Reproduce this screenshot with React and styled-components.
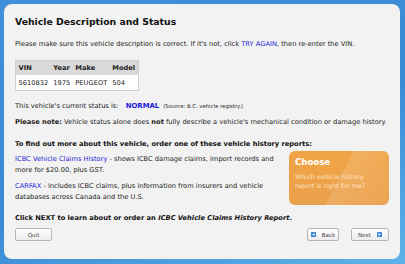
import React from "react";
import styled, { createGlobalStyle } from "styled-components";

const Global = createGlobalStyle`
  html, body { margin: 0; padding: 0; }
  body {
    width: 405px;
    height: 264px;
    overflow: hidden;
    background: linear-gradient(160deg, #3f8fd8 0%, #3b8ad6 55%, #5cb2e8 100%);
    font-family: "DejaVu Sans", Verdana, sans-serif;
  }
`;

const Page = styled.div`
  padding: 4px 5px 5px 4px;
`;

const Panel = styled.div`
  box-sizing: border-box;
  width: 396px;
  height: 255px;
  background: #f2f2f2;
  border-radius: 8px;
  padding: 12px 11px 0 11px;
  color: #222;
  font-size: 6.7px;
  display: flex;
  flex-direction: column;
`;

const Title = styled.h1`
  margin: 0;
  font-size: 9.3px;
  line-height: 12px;
  font-weight: bold;
  color: #111;
`;

const Para = styled.p`
  margin: ${(p) => p.$mt || 0}px 0 0 0;
  line-height: ${(p) => p.$lh || 10}px;
  font-weight: ${(p) => (p.$bold ? "bold" : "normal")};
  color: ${(p) => (p.$bold ? "#111" : "#222")};
  white-space: ${(p) => (p.$nowrap ? "nowrap" : "normal")};
`;

const Link = styled.span`
  color: #2424d6;
`;

const Table = styled.table`
  margin-top: 11px;
  border-collapse: collapse;
  border: 1px solid #cfcfcf;
  align-self: flex-start;
`;

const Th = styled.th`
  background: #d9d9d9;
  font-weight: bold;
  text-align: ${(p) => p.$align || "left"};
  padding: 0 2.5px;
  height: 14px;
  color: #222;
`;

const Td = styled.td`
  background: #fff;
  padding: 0 2.5px;
  height: 15px;
  white-space: nowrap;
`;

const Status = styled.span`
  color: #1717d8;
  font-weight: bold;
  font-size: 6.9px;
  margin-left: 5px;
`;

const Source = styled.span`
  font-size: 5.3px;
  margin-left: 4px;
`;

const Reports = styled.div`
  display: flex;
  justify-content: space-between;
  margin-top: 2px;
`;

const ReportText = styled.div`
  width: 272px;
  padding-top: 2.5px;
`;

const Card = styled.div`
  box-sizing: border-box;
  width: 100px;
  height: 54px;
  border-radius: 6px;
  padding: 5px 6px;
  background:
    linear-gradient(118deg, rgba(255,255,255,0) 0%, rgba(255,255,255,0) 50%, rgba(255,255,255,0.13) 51%, rgba(255,255,255,0.04) 100%),
    linear-gradient(180deg, #f0a445 0%, #eba04c 100%);
  color: #fff;
`;

const CardTitle = styled.div`
  font-size: 8.6px;
  line-height: 12px;
  font-weight: bold;
  color: #fff;
`;

const CardText = styled.div`
  margin-top: 5px;
  font-size: 6.4px;
  line-height: 9px;
  color: #fde3c2;
`;

const Buttons = styled.div`
  display: flex;
  justify-content: space-between;
  margin-top: 5px;
`;

const Group = styled.div`
  display: flex;
  gap: 12px;
`;

const Button = styled.button`
  box-sizing: border-box;
  height: 13px;
  width: ${(p) => p.$w}px;
  padding: 0;
  display: flex;
  align-items: center;
  justify-content: center;
  gap: 6px;
  border: 1px solid #b5b5b5;
  border-radius: 2px;
  background: linear-gradient(#ffffff, #ececec);
  font-family: "DejaVu Sans", Verdana, sans-serif;
  font-size: 5.6px;
  color: #444;
`;

const Arrow = ({ dir }) => (
  <svg width="5" height="5" viewBox="0 0 5 5">
    <rect width="5" height="5" rx="0.6" fill="#3a86d4" />
    {dir === "left" ? (
      <path d="M1.2 2.5 L3.5 1 L3.5 4 Z" fill="#fff" />
    ) : (
      <path d="M3.8 2.5 L1.5 1 L1.5 4 Z" fill="#fff" />
    )}
  </svg>
);

export default function App() {
  return (
    <Page>
      <Global />
      <Panel>
        <Title>Vehicle Description and Status</Title>
        <Para $mt={11} $nowrap>
          Please make sure this vehicle description is correct. If it's not, click{" "}
          <Link>TRY AGAIN</Link>, then re-enter the VIN.
        </Para>
        <Table>
          <thead>
            <tr>
              <Th>VIN</Th>
              <Th>Year</Th>
              <Th>Make</Th>
              <Th $align="right">Model</Th>
            </tr>
          </thead>
          <tbody>
            <tr>
              <Td>5610832</Td>
              <Td>1975</Td>
              <Td>PEUGEOT</Td>
              <Td>504</Td>
            </tr>
          </tbody>
        </Table>
        <Para $mt={10} $nowrap>
          This vehicle's current status is: <Status>NORMAL</Status>
          <Source>(Source: B.C. vehicle registry.)</Source>
        </Para>
        <Para $mt={6} $nowrap>
          <b>Please note:</b> Vehicle status alone does <b>not</b> fully describe a vehicle's
          mechanical condition or damage history.
        </Para>
        <Para $mt={12} $bold $nowrap>
          To find out more about this vehicle, order one of these vehicle history reports:
        </Para>
        <Reports>
          <ReportText>
            <Para $lh={11}>
              <Link>ICBC Vehicle Claims History</Link> - shows ICBC damage claims, import records and
              more for $20.00, plus GST.
            </Para>
            <Para $mt={5} $lh={11}>
              <Link>CARFAX</Link> - includes ICBC claims, plus information from insurers and vehicle
              databases across Canada and the U.S.
            </Para>
          </ReportText>
          <Card>
            <CardTitle>Choose</CardTitle>
            <CardText>Which vehicle history report is right for me?</CardText>
          </Card>
        </Reports>
        <Para $mt={8} $bold $nowrap>
          Click NEXT to learn about or order an <i>ICBC Vehicle Claims History Report</i>.
        </Para>
        <Buttons>
          <Button $w={37}>Quit</Button>
          <Group>
            <Button $w={32}>
              <Arrow dir="left" />
              Back
            </Button>
            <Button $w={38}>
              Next
              <Arrow dir="right" />
            </Button>
          </Group>
        </Buttons>
      </Panel>
    </Page>
  );
}
